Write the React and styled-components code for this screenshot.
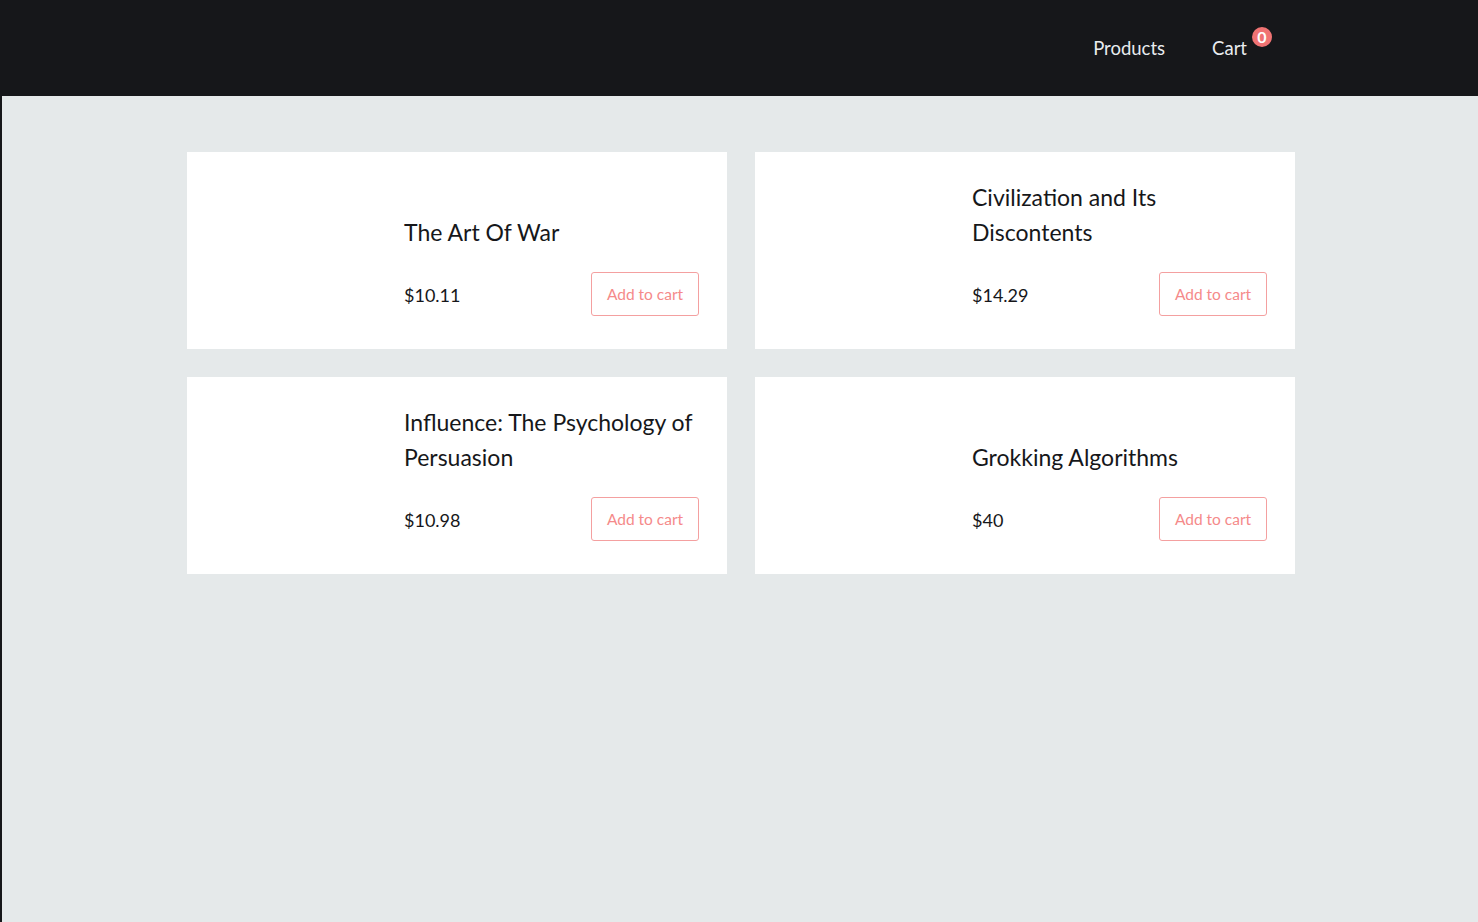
import React from "react";
import styled, { createGlobalStyle } from "styled-components";

const GlobalStyle = createGlobalStyle`
  * {
    box-sizing: border-box;
  }
  body {
    margin: 0;
    font-family: Lato, "Open Sans", sans-serif;
    background: #e5e9ea;
  }
`;

const Page = styled.div`
  min-height: 922px;
  background: #e5e9ea;
  border-left: 2px solid #16171a;
  padding-left: 2px;
`;

const NavBar = styled.header`
  height: 96px;
  margin-left: -2px;
  background: #16171a;
  display: flex;
  justify-content: center;
`;

const NavInner = styled.nav`
  width: 1108px;
  margin-left: 2px;
  display: flex;
  justify-content: flex-end;
  align-items: center;
  gap: 47px;
  padding-right: 48px;
  padding-bottom: 1px;
`;

const NavLink = styled.a`
  position: relative;
  color: #e9ecef;
  font-size: 18.5px;
  text-decoration: none;
  cursor: pointer;
`;

const Badge = styled.span`
  position: absolute;
  top: -10px;
  right: -25px;
  width: 20px;
  height: 20px;
  border-radius: 50%;
  background: #f07373;
  color: #fff;
  font-size: 16px;
  font-weight: 700;
  display: flex;
  align-items: center;
  justify-content: center;
`;

const Main = styled.main`
  width: 1108px;
  margin: 0 auto;
  padding-top: 56px;
  display: grid;
  grid-template-columns: 1fr 1fr;
  gap: 28px;
`;

const Card = styled.div`
  background: #fff;
  padding: 28px 28px 33px;
  display: flex;
`;

const Cover = styled.div`
  width: 189px;
  min-height: 136px;
  flex-shrink: 0;
`;

const Info = styled.div`
  flex: 1;
  display: flex;
  flex-direction: column;
  justify-content: flex-end;
  gap: 22px;
`;

const Title = styled.h3`
  margin: 0;
  font-size: 23px;
  font-weight: 400;
  line-height: 35px;
  color: #16171a;
`;

const Row = styled.div`
  display: flex;
  align-items: center;
  justify-content: space-between;
`;

const Price = styled.span`
  font-size: 18px;
  padding-top: 2px;
  color: #16171a;
`;

const AddButton = styled.button`
  width: 108px;
  height: 44px;
  background: #fff;
  border: 1px solid #f4a0a0;
  border-radius: 3px;
  color: #f58a8a;
  font-family: Lato, "Open Sans", sans-serif;
  font-size: 15.5px;
  cursor: pointer;
`;

const books = [
  { title: "The Art Of War", price: "$10.11" },
  { title: "Civilization and Its Discontents", price: "$14.29" },
  { title: "Influence: The Psychology of Persuasion", price: "$10.98" },
  { title: "Grokking Algorithms", price: "$40" },
];

export default function App() {
  return (
    <Page>
      <GlobalStyle />
      <NavBar>
        <NavInner>
          <NavLink>Products</NavLink>
          <NavLink>
            Cart
            <Badge>0</Badge>
          </NavLink>
        </NavInner>
      </NavBar>
      <Main>
        {books.map((b) => (
          <Card key={b.title}>
            <Cover />
            <Info>
              <Title>{b.title}</Title>
              <Row>
                <Price>{b.price}</Price>
                <AddButton>Add to cart</AddButton>
              </Row>
            </Info>
          </Card>
        ))}
      </Main>
    </Page>
  );
}
